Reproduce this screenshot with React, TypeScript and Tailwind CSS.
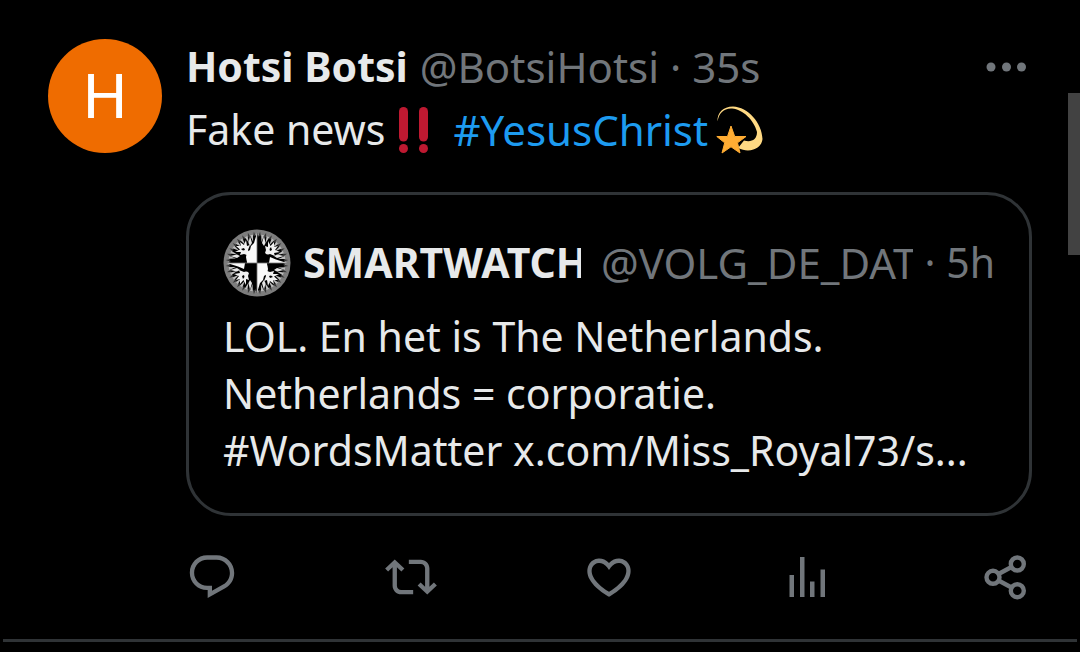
import type { ReactNode } from "react";

const rayAngles = Array.from({ length: 32 }, (_, i) => i * 11.25 + 5.625);
const quarterTurns = [0, 90, 180, 270];

function CompassAvatar() {
  return (
    <svg viewBox="-34 -34 68 68" className="size-17 shrink-0" role="img" aria-label="Compass rose">
      <circle r="33.5" fill="#7d7d7d" />
      <circle r="28" fill="#000" />
      {rayAngles.map((a) => (
        <g key={a} transform={`rotate(${a})`}>
          <path d="M-1.2 -27L0 -31.5L1.2 -27Z" fill="#333" />
          <path d="M-1.4 -28.5L0.3 -21.5L1.6 -28.5Z" transform="rotate(5.6)" fill="#bdbdbd" />
        </g>
      ))}
      {quarterTurns.map((a) => (
        <g key={a} transform={`rotate(${a})`}>
          <path
            d="M7 -7L9 -13L8 -17L11 -16L11 -22L13.5 -17L17 -21L17 -16L21 -17L18 -13L23 -11L17 -10L18 -7L13 -9Z"
            fill="#f2f2f2"
          />
          <path d="M5 -20L7 -27L8.5 -20L7 -17ZM20 -5L27 -7L20 -8.5L17 -7Z" fill="#e6e6e6" />
          <path d="M12.5 -14L14 -16L15 -13L13 -12Z" fill="#000" />
        </g>
      ))}
      <path d="M0 -30L-3 -20L-6 -17L-7 -13L-10 -11L-11 -6L-10 0H0Z" fill="#fafafa" />
      <path d="M0 30L3 20L6 17L7 13L10 11L11 6L10 0H0Z" fill="#fafafa" />
      <path d="M0 -30L3 -21L5 -18L6 -13L9 -9L12 -8L12 0H0Z" fill="#000" />
      <path d="M0 30L-3 21L-5 18L-6 13L-9 9L-12 8L-12 0H0Z" fill="#000" />
      <path d="M12 0L13 -6L19 -3.5L30 0ZM-12 0L-13 6L-19 3.5L-30 0Z" fill="#fafafa" />
      <path d="M10 0L12 6L19 4L29 0ZM-10 0L-12 -6L-19 -4L-29 0Z" fill="#000" />
      <path d="M0 -29V29M-29 0H29" stroke="#777" strokeWidth="0.8" />
    </svg>
  );
}

function DoubleExclamation() {
  return (
    <svg viewBox="0 0 48 48" className="size-12 shrink-0" role="img" aria-label="Double exclamation mark">
      <g fill="#be1931">
        <rect x="10" y="1" width="9" height="34.5" rx="4.5" />
        <rect x="30" y="1" width="9" height="34.5" rx="4.5" />
        <circle cx="14.5" cy="42.5" r="4.5" />
        <circle cx="34.5" cy="42.5" r="4.5" />
      </g>
    </svg>
  );
}

function DizzyStar() {
  return (
    <svg viewBox="0 0 48 48" className="size-12 shrink-0" role="img" aria-label="Shooting star">
      <path
        d="M1.500 15.500C1 7 7 0.500 17 0.500C32 1 46 17 46.500 33C46 42 34 48 22 42L28 34.500C35 36.500 41 34 41 26C38 14 27 3.500 16 2.500C8 2 3 7 1.500 15.500Z"
        fill="#ffd983"
      />
      <path
        d="M15 20L18.7 30.5H30L21.5 36.8L24 47L15 40.8L6 47L8.7 36.8L0.8 30.5H11.5Z"
        fill="#ffac33"
        stroke="#ffac33"
        strokeLinejoin="round"
      />
    </svg>
  );
}

function Icon({ children, viewBox = "0 0 24 24" }: { children: ReactNode; viewBox?: string }) {
  return (
    <svg viewBox={viewBox} className="size-13" fill="currentColor" aria-hidden="true">
      {children}
    </svg>
  );
}

const actions = [
  {
    label: "Reply",
    icon: (
      <Icon>
        <path d="M1.751 10c0-4.42 3.584-8 8.005-8h4.366c4.49 0 8.129 3.64 8.129 8.13 0 2.96-1.607 5.68-4.196 7.11l-8.054 4.46v-3.69h-.067c-4.49.1-8.183-3.51-8.183-8.01zm8.005-6c-3.317 0-6.005 2.69-6.005 6 0 3.37 2.77 6.08 6.138 6.01l.351-.01h1.761v2.3l5.087-2.81c1.951-1.08 3.163-3.13 3.163-5.36 0-3.39-2.744-6.13-6.129-6.13H9.756z" />
      </Icon>
    ),
  },
  {
    label: "Repost",
    icon: (
      <Icon>
        <path d="M4.5 3.88l4.432 4.14-1.364 1.46L5.5 7.55V16c0 1.1.896 2 2 2H13v2H7.5c-2.209 0-4-1.79-4-4V7.55L1.432 9.48.068 8.02 4.5 3.88zM16.5 6H11V4h5.5c2.209 0 4 1.79 4 4v8.45l2.068-1.93 1.364 1.46-4.432 4.14-4.432-4.14 1.364-1.46 2.068 1.93V8c0-1.1-.896-2-2-2z" />
      </Icon>
    ),
  },
  {
    label: "Like",
    icon: (
      <Icon>
        <path d="M16.697 5.5c-1.222-.06-2.679.51-3.89 2.16l-.805 1.09-.806-1.09C9.984 6.01 8.526 5.44 7.304 5.5c-1.243.07-2.349.78-2.91 1.91-.552 1.12-.633 2.78.479 4.82 1.074 1.97 3.257 4.27 7.129 6.61 3.87-2.34 6.052-4.64 7.126-6.61 1.111-2.04 1.03-3.7.477-4.82-.561-1.13-1.666-1.84-2.908-1.91zm4.187 7.69c-1.351 2.48-4.001 5.12-8.379 7.67l-.503.3-.504-.3c-4.379-2.55-7.029-5.19-8.382-7.67-1.36-2.5-1.41-4.86-.514-6.67.887-1.79 2.647-2.91 4.601-3.01 1.651-.09 3.368.56 4.798 2.01 1.429-1.45 3.146-2.1 4.796-2.01 1.954.1 3.714 1.22 4.601 3.01.896 1.81.846 4.17-.514 6.67z" />
      </Icon>
    ),
  },
  {
    label: "View analytics",
    icon: (
      <Icon viewBox="0 0 52 52">
        <path d="M7.5 24h4.5v22h-4.5zM18 6h4.5v40h-4.5zM28 30.5h4.5v15.5h-4.5zM38.5 18.5h4.5v27.5h-4.5z" />
      </Icon>
    ),
  },
  {
    label: "Share",
    icon: (
      <Icon viewBox="0 0 52 52">
        <g fill="none" stroke="currentColor" strokeWidth="4.4">
          <circle cx="13" cy="26.3" r="6.5" />
          <circle cx="37.3" cy="13" r="6.5" />
          <circle cx="37.3" cy="39.7" r="6.5" />
          <path d="M18.5 23L31.5 16M18.5 29.5L31.5 36.5" />
        </g>
      </Icon>
    ),
  },
];

export default function App() {
  return (
    <main className="relative min-h-screen bg-black px-[3px] font-['Noto_Sans',sans-serif] text-[41px] leading-[57px] text-[#e7e9ea]">
      <article className="flex gap-6 border-b-3 border-[#2f3336] px-[45px] pt-[38px] pb-9">
        <div className="mt-px flex size-[114px] shrink-0 items-center justify-center rounded-full bg-[#ef6c00] font-['Roboto',sans-serif] text-[62px] text-white">
          H
        </div>
        <div className="min-w-0 flex-1">
          <header className="flex items-center">
            <span className="font-bold">Hotsi Botsi</span>
            <span className="ml-3 text-[42px] text-[#71767b]">@BotsiHotsi · 35s</span>
            <button type="button" aria-label="More" className="ml-auto text-[#71767b]">
              <svg viewBox="0 0 46 10" className="h-[10px] w-[46px]" fill="currentColor" aria-hidden="true">
                <circle cx="5" cy="5" r="4.5" />
                <circle cx="20.5" cy="5" r="4.5" />
                <circle cx="35.5" cy="5" r="4.5" />
              </svg>
            </button>
          </header>
          <p className="mt-1.5 flex items-center">
            <span>Fake news</span>
            <span className="ml-1"><DoubleExclamation /></span>
            <a href="#YesusChrist" className="mr-2 ml-4 text-[42px] text-[#1d9bf0]">#YesusChrist</a>
            <DizzyStar />
          </p>

          <section className="mt-[34px] rounded-[45px] border-3 border-[#2f3336] px-[34px] pt-[34px] pb-[34px]">
            <div className="flex items-center">
              <CompassAvatar />
              <div className="ml-3 flex min-w-0 flex-1 gap-3 pb-0.5 whitespace-nowrap">
                <div className="w-[286px] shrink-0">
                  <div className="w-[278px] overflow-hidden font-bold">SMARTWATCH</div>
                </div>
                <span className="min-w-0 flex-1 overflow-hidden text-[42px] text-[#71767b]">@VOLG_DE_DATA</span>
                <span className="shrink-0 text-[#71767b]">· 5h</span>
              </div>
            </div>
            <p className="mt-[11px]">
              LOL. En het is The Netherlands.
              <br />
              Netherlands = corporatie.
              <br />
              #WordsMatter x.com/Miss_Royal73/s...
            </p>
          </section>

          <div className="mt-[35px] flex justify-between text-[#71767b]">
            {actions.map((action) => (
              <button key={action.label} type="button" aria-label={action.label}>
                {action.icon}
              </button>
            ))}
          </div>
        </div>
      </article>
      <div className="absolute top-[93px] right-0 h-[162px] w-3 bg-[#424242]" />
    </main>
  );
}
